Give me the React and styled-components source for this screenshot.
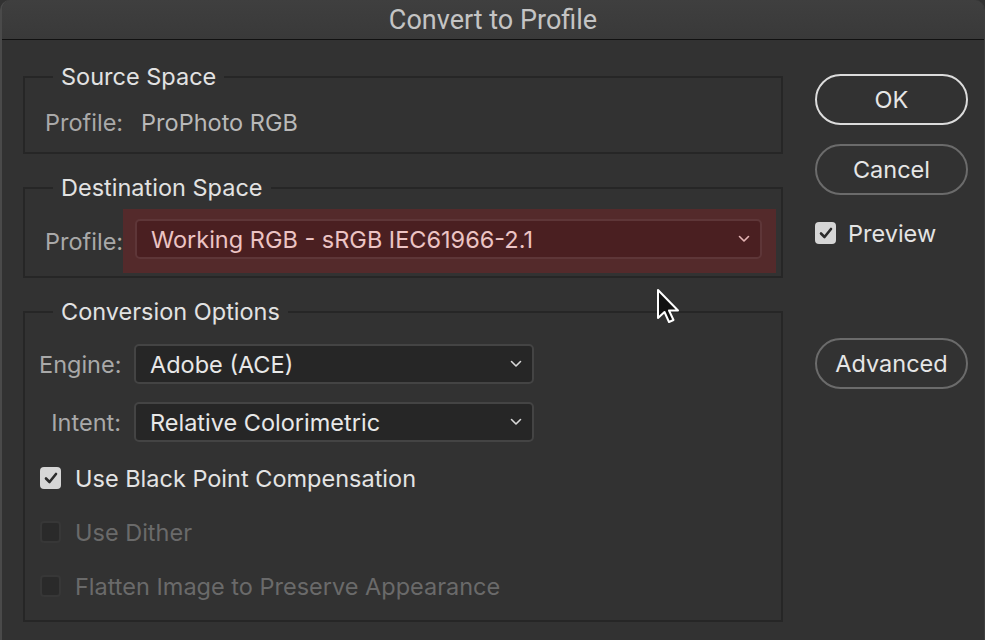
import styled, { createGlobalStyle } from 'styled-components';

const GlobalStyle = createGlobalStyle`
  html, body {
    margin: 0;
    padding: 0;
    background: #323232;
  }
  body {
    font-family: Inter, "Noto Sans", sans-serif;
    -webkit-font-smoothing: antialiased;
  }
`;

function Chevron({ color }) {
  return (
    <svg width="12" height="8" viewBox="0 0 12 8">
      <polyline
        points="1.5,1.5 6,6 10.5,1.5"
        fill="none"
        stroke={color}
        strokeWidth="1.6"
        strokeLinecap="round"
        strokeLinejoin="round"
      />
    </svg>
  );
}

function Check() {
  return (
    <svg width="14" height="12" viewBox="0 0 14 12">
      <polyline
        points="2,6.5 5.5,10 12,2"
        fill="none"
        stroke="#2b2b2b"
        strokeWidth="2.6"
        strokeLinecap="round"
        strokeLinejoin="round"
      />
    </svg>
  );
}

function Checkbox({ checked, disabled, children }) {
  return (
    <CheckRow>
      <Box checked={checked} disabled={disabled}>
        {checked && <Check />}
      </Box>
      <CheckLabel disabled={disabled}>{children}</CheckLabel>
    </CheckRow>
  );
}

function App() {
  return (
    <>
      <GlobalStyle />
      <Window>
        <TitleBar>Convert to Profile</TitleBar>
        <Body>
          <Main>
            <Group>
              <Legend>Source Space</Legend>
              <SourceRow>
                <FieldLabel>Profile:</FieldLabel>
                <Value>ProPhoto RGB</Value>
              </SourceRow>
            </Group>

            <Group>
              <Legend>Destination Space</Legend>
              <DestRow>
                <FieldLabel width={78}>Profile:</FieldLabel>
                <FocusRing>
                  <Select wide danger>
                    <span>Working RGB - sRGB IEC61966-2.1</span>
                    <Chevron color="#e4b4b4" />
                  </Select>
                </FocusRing>
              </DestRow>
            </Group>

            <Group>
              <Legend>Conversion Options</Legend>
              <OptionsBody>
                <SelectRow>
                  <FieldLabel width={95} right>Engine:</FieldLabel>
                  <Select>
                    <span>Adobe (ACE)</span>
                    <Chevron color="#d8d8d8" />
                  </Select>
                </SelectRow>
                <SelectRow>
                  <FieldLabel width={95} right>Intent:</FieldLabel>
                  <Select>
                    <span>Relative Colorimetric</span>
                    <Chevron color="#d8d8d8" />
                  </Select>
                </SelectRow>
                <Checks>
                  <Checkbox checked>Use Black Point Compensation</Checkbox>
                  <Checkbox disabled>Use Dither</Checkbox>
                  <Checkbox disabled>Flatten Image to Preserve Appearance</Checkbox>
                </Checks>
              </OptionsBody>
            </Group>
          </Main>

          <Side>
            <Button primary>OK</Button>
            <Button>Cancel</Button>
            <PreviewRow>
              <Checkbox checked>Preview</Checkbox>
            </PreviewRow>
            <Button>Advanced</Button>
          </Side>
        </Body>

        <Cursor width="26" height="38" viewBox="0 0 26 38">
          <path
            d="M2,2 L2,30 L8.5,24 L13,34 L17.5,32 L13,22.5 L22,22.5 Z"
            fill="#111"
            stroke="#fff"
            strokeWidth="2"
            strokeLinejoin="round"
          />
        </Cursor>
      </Window>
    </>
  );
}

const Window = styled.div`
  position: relative;
  width: 985px;
  height: 640px;
  box-sizing: border-box;
  background: #323232;
  border-left: 2px solid #4a4a4a;
  border-right: 1px solid #3e3e3e;
  border-radius: 10px 10px 0 0;
  overflow: hidden;
  display: flex;
  flex-direction: column;
`;

const TitleBar = styled.div`
  height: 40px;
  flex-shrink: 0;
  display: flex;
  align-items: center;
  justify-content: center;
  background: linear-gradient(#3f3f3f, #393939);
  border-bottom: 1px solid #111;
  color: #c4c4c4;
  font-family: Roboto, Inter, sans-serif;
  font-size: 27px;
  box-sizing: border-box;
`;

const Body = styled.div`
  display: flex;
  padding: 24px 0 0 21px;
`;

const Main = styled.div`
  width: 760px;
  display: flex;
  flex-direction: column;
  gap: 21px;
`;

const Group = styled.fieldset`
  margin: 0;
  padding: 0 5px 0 20px;
  border: 2px solid #262626;
  min-width: 0;
`;

const Legend = styled.legend`
  margin-left: 8px;
  padding: 0 8px;
  color: #e2e2e2;
  font-size: 23.5px;
  line-height: 26px;
`;

const SourceRow = styled.div`
  display: flex;
  align-items: center;
  height: 30px;
  padding: 17px 0 15px;
  font-size: 23.5px;
`;

const FieldLabel = styled.span`
  width: ${(p) => (p.width ? `${p.width}px` : 'auto')};
  flex-shrink: 0;
  text-align: ${(p) => (p.right ? 'right' : 'left')};
  padding-right: ${(p) => (p.right ? '13px' : '0')};
  box-sizing: border-box;
  color: #a9a9a9;
  font-size: 23.5px;
  white-space: nowrap;
`;

const Value = styled.span`
  margin-left: 18px;
  color: #b9b9b9;
`;

const DestRow = styled.div`
  display: flex;
  align-items: center;
  padding: 8px 0 3px;
`;

const FocusRing = styled.div`
  flex: 1;
  padding: 10px 14px 14px 12px;
  background: #542a2b;
`;

const Select = styled.div`
  width: ${(p) => (p.wide ? '100%' : '400px')};
  height: 40px;
  box-sizing: border-box;
  display: flex;
  align-items: center;
  justify-content: space-between;
  padding: 0 10px 0 14px;
  border-radius: 5px;
  background: ${(p) => (p.danger ? '#4a1f21' : '#262626')};
  border: 2px solid ${(p) => (p.danger ? '#5e3638' : '#444')};
  color: ${(p) => (p.danger ? '#ecc4c4' : '#e8e8e8')};
  font-size: 23.5px;
`;

const OptionsBody = styled.div`
  display: flex;
  flex-direction: column;
  margin-left: -6px;
  padding-top: 19px;
`;

const SelectRow = styled.div`
  display: flex;
  align-items: center;
  margin-bottom: 18px;
`;

const Checks = styled.div`
  display: flex;
  flex-direction: column;
  gap: 24px;
  padding: 3px 0 19px 1px;
`;

const CheckRow = styled.label`
  display: flex;
  align-items: center;
  gap: 14px;
  height: 30px;
`;

const Box = styled.span`
  width: 21px;
  height: 22px;
  box-sizing: border-box;
  border-radius: 4px;
  display: flex;
  align-items: center;
  justify-content: center;
  background: ${(p) => (p.checked ? '#d6d6d6' : '#2a2a2a')};
  border: ${(p) => (p.checked ? 'none' : '2px solid #373737')};
`;

const CheckLabel = styled.span`
  color: ${(p) => (p.disabled ? '#6a6a6a' : '#e4e4e4')};
  font-size: 23.5px;
`;

const Side = styled.div`
  display: flex;
  flex-direction: column;
  padding: 10px 0 0 32px;
`;

const Button = styled.div`
  width: 153px;
  height: 51px;
  box-sizing: border-box;
  border-radius: 26px;
  display: flex;
  align-items: center;
  justify-content: center;
  border: 2px solid ${(p) => (p.primary ? '#dcdcdc' : '#6b6b6b')};
  color: #e6e6e6;
  font-size: 23.5px;
  margin-bottom: 19px;
`;

const PreviewRow = styled.div`
  margin: 4px 0 0 0;
  height: 120px;
  margin-left: 0;
  & > label {
    gap: 12px;
  }
`;

const Cursor = styled.svg`
  position: absolute;
  left: 654px;
  top: 288px;
`;

export default App;
